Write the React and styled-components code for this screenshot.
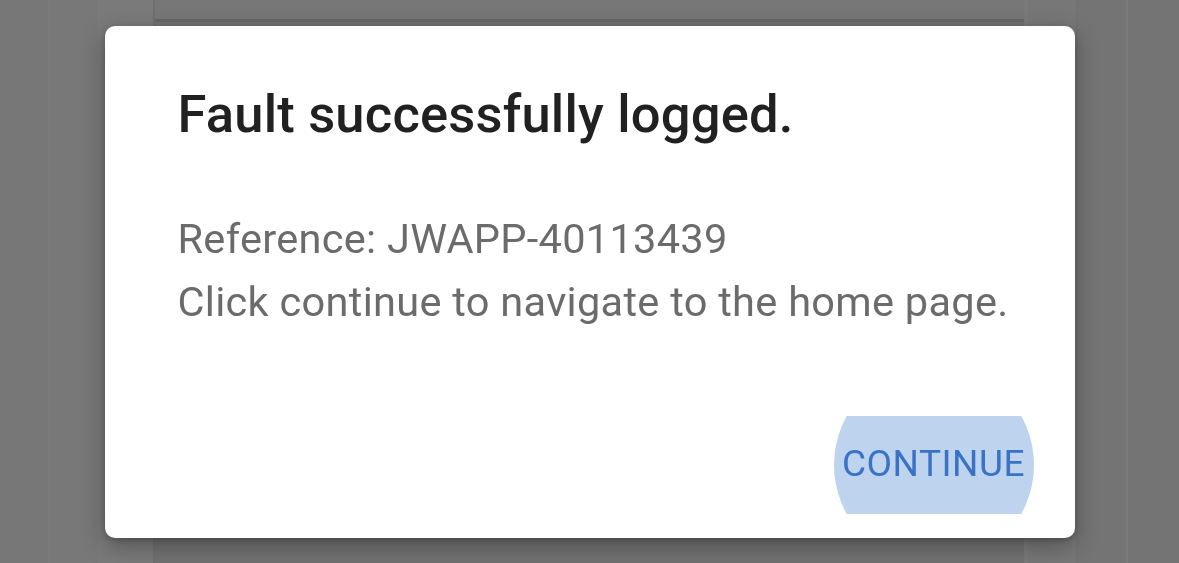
import React from 'react';
import styled, { createGlobalStyle } from 'styled-components';

const GlobalStyle = createGlobalStyle`
  html, body {
    margin: 0;
    padding: 0;
    height: 100%;
    overflow: hidden;
    background: #747474;
    font-family: Roboto, "Liberation Sans", sans-serif;
  }
  #root { height: 100%; }
`;

// page behind the scrim
const Page = styled.div`
  display: flex;
  height: 563px;
  background: #757575;
`;

const Rail = styled.div`
  width: ${p => p.w}px;
  flex-shrink: 0;
  background: ${p => p.bg || '#767676'};
  border-right: 2px solid ${p => p.line || '#7b7b7b'};
`;

const Main = styled.div`
  flex: 1;
  display: flex;
  flex-direction: column;
  background: #727272;
  border-right: 4px solid #7a7a7a;
`;

const TopCard = styled.div`
  height: 19px;
  background: #777;
  border-bottom: 3px solid #676767;
`;

const Scrim = styled.div`
  position: fixed;
  inset: 0;
  display: flex;
  align-items: center;
  justify-content: center;
`;

const Dialog = styled.div`
  width: 970px;
  height: 512px;
  box-sizing: border-box;
  background: #fff;
  border-radius: 10px;
  box-shadow: 0 8px 24px rgba(0, 0, 0, 0.3), 0 2px 6px rgba(0, 0, 0, 0.2);
  display: flex;
  flex-direction: column;
  padding: 58px 29px 24px 73px;
`;

const Title = styled.h1`
  margin: 0;
  font-size: 52.5px;
  font-weight: 500;
  color: #212121;
  line-height: 60px;
  letter-spacing: 0.2px;
  white-space: nowrap;
`;

const Body = styled.div`
  margin-top: 63px;
  font-size: 41.5px;
  line-height: 63px;
  color: #6b6b6b;
  letter-spacing: 0.3px;
  white-space: nowrap;
`;

const Actions = styled.div`
  margin-top: auto;
  display: flex;
  justify-content: flex-end;
`;

const Button = styled.button`
  position: relative;
  overflow: hidden;
  height: 98px;
  width: 224px;
  border: none;
  background: transparent;
  padding: 0 0 3px;
  font-family: Roboto, "Liberation Sans", sans-serif;
  font-size: 37px;
  font-weight: 400;
  color: #3a72c6;
  letter-spacing: 0.5px;
  display: flex;
  align-items: center;
  justify-content: center;
  cursor: pointer;
`;

const Ripple = styled.span`
  position: absolute;
  width: 200px;
  height: 200px;
  border-radius: 50%;
  background: #bed3ee;
  left: 50%;
  top: 50%;
  transform: translate(-50%, -50%);
`;

const Label = styled.span`
  position: relative;
`;

export default function App() {
  return (
    <>
      <GlobalStyle />
      <Page>
        <Rail w={48} bg="#777" />
        <Rail w={48} bg="#787878" />
        <Rail w={53} bg="#7a7a7a" line="#6f6f6f" />
        <Main>
          <TopCard />
        </Main>
        <Rail w={48} bg="#777" line="#727272" />
        <Rail w={48} bg="#747474" />
        <Rail w={49} bg="#747474" line="#747474" />
      </Page>
      <Scrim>
        <Dialog>
          <Title>Fault successfully logged.</Title>
          <Body>
            Reference: JWAPP-40113439
            <br />
            Click continue to navigate to the home page.
          </Body>
          <Actions>
            <Button>
              <Ripple />
              <Label>CONTINUE</Label>
            </Button>
          </Actions>
        </Dialog>
      </Scrim>
    </>
  );
}
